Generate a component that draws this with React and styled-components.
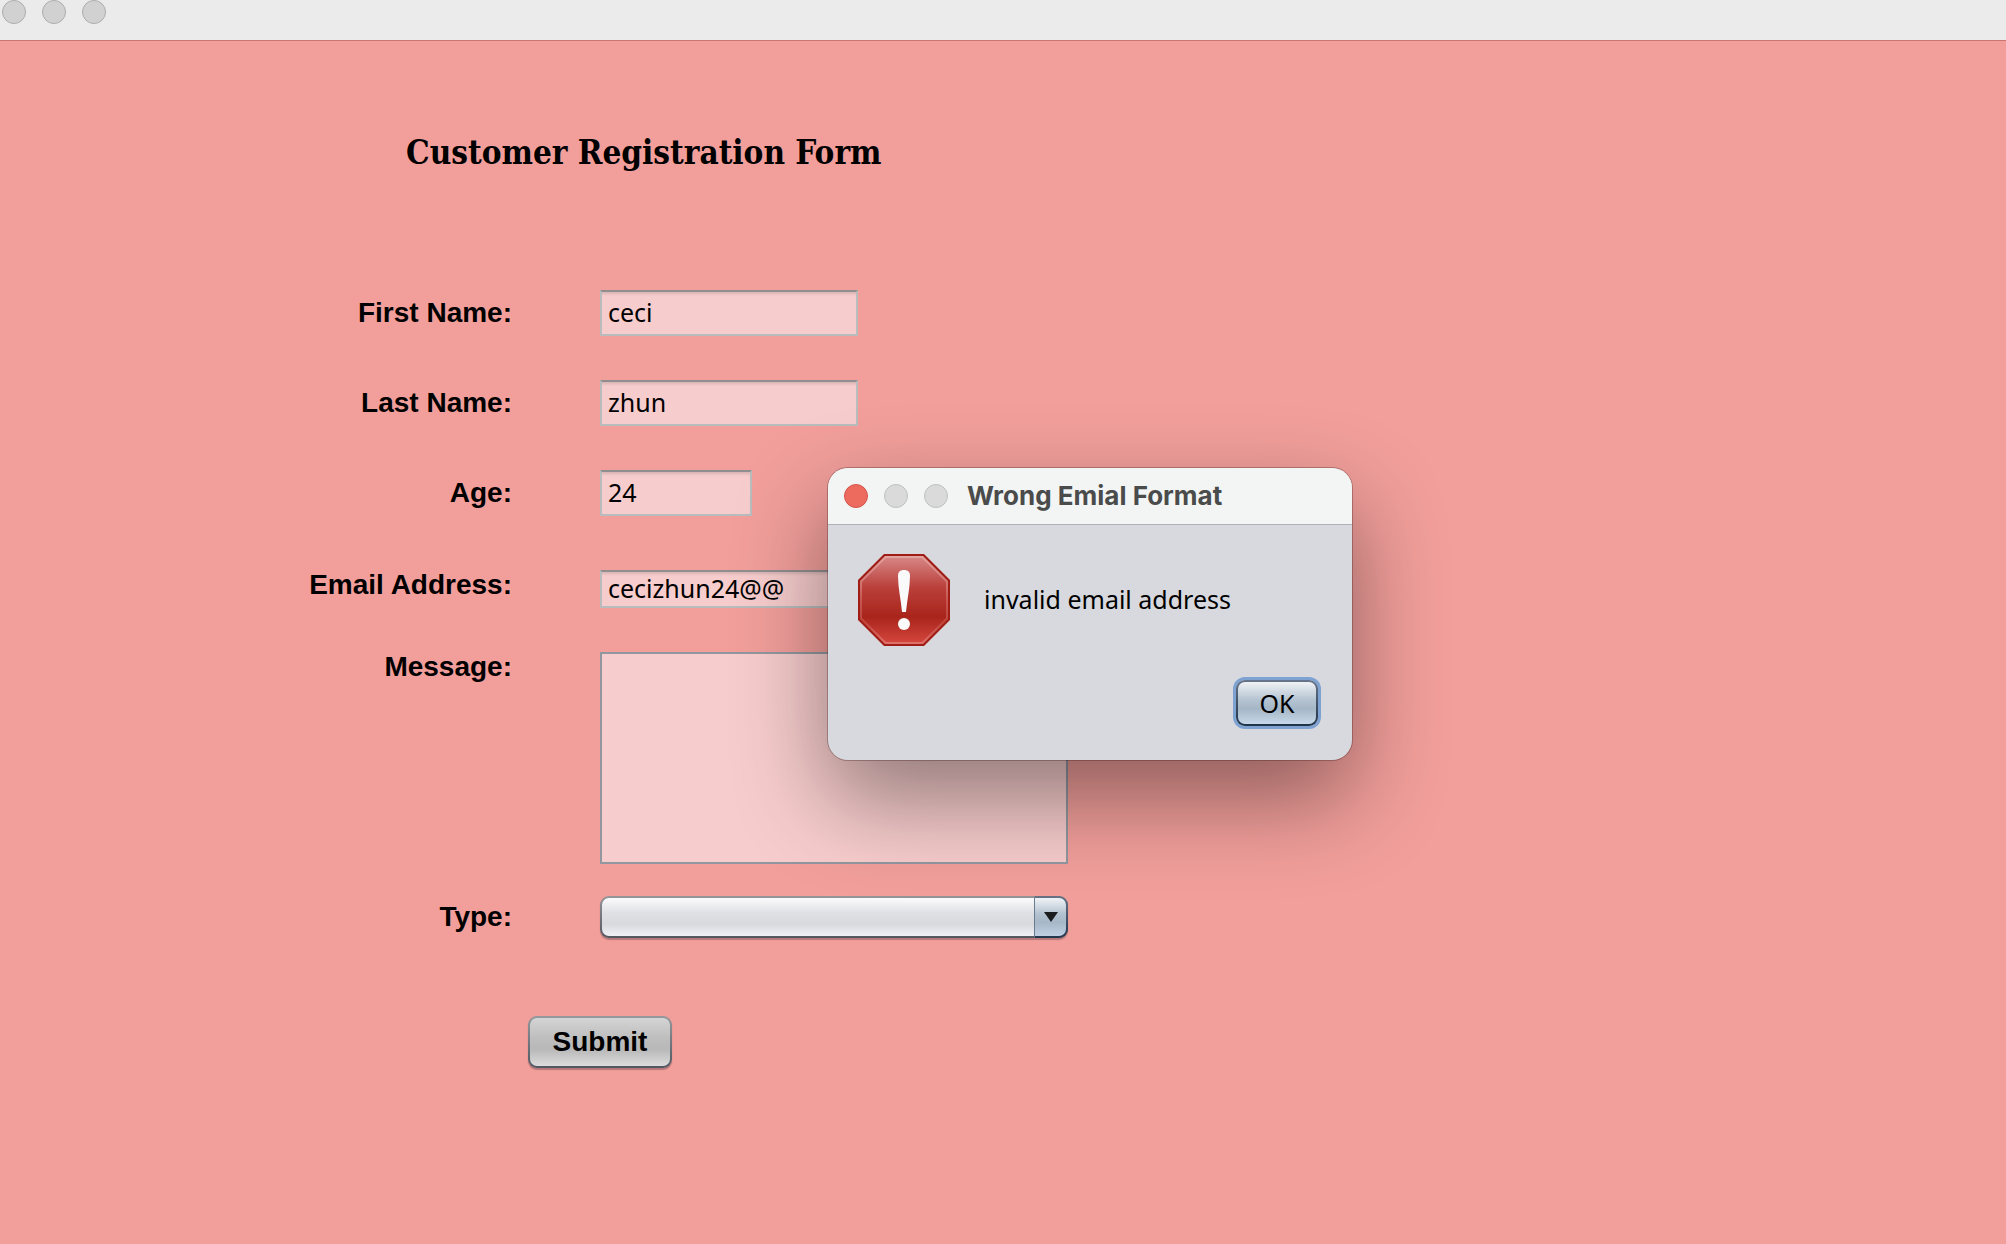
import React, { useState } from "react";
import styled, { createGlobalStyle } from "styled-components";

const GlobalStyle = createGlobalStyle`
  *, *::before, *::after { box-sizing: border-box; }
  body { margin: 0; background: #f29f9b; }
`;

const sans = `"Liberation Sans", Arial, sans-serif`;
const humanist = `"Noto Sans", "Open Sans", sans-serif`;

const Window = styled.div`
  position: relative;
  display: flex;
  flex-direction: column;
  min-height: 100vh;
  background: #f29f9b;
  color: #000;
  font-family: ${sans};
  overflow: hidden;
`;

const WindowBar = styled.header`
  display: flex;
  align-items: flex-start;
  gap: 16px;
  height: 41px;
  padding-left: 2px;
  background: #ebebeb;
  border-bottom: 1px solid #c87672;
`;

const Light = styled.button`
  width: 24px;
  height: 24px;
  padding: 0;
  border: 1px solid ${(p) => (p.$close ? "#d5554b" : p.$pale ? "#bfc0bf" : "#adadad")};
  border-radius: 50%;
  background: ${(p) => (p.$close ? "#ec6a5e" : p.$pale ? "#d9dad9" : "#d1d1d1")};
`;

const Content = styled.main`
  padding-top: 94px;
`;

const Heading = styled.h1`
  margin: 0;
  padding-left: 406px;
  font: bold 33px/36px "DejaVu Serif Condensed", "DejaVu Serif", serif;
`;

const Form = styled.form`
  display: flex;
  flex-direction: column;
  padding-top: 119px;
`;

const Row = styled.div`
  display: grid;
  grid-template-columns: 512px 1fr;
  column-gap: 88px;
  align-items: ${(p) => (p.$top ? "start" : "center")};
  margin-bottom: ${(p) => p.$after || 44}px;
`;

const Label = styled.label`
  font-size: 28px;
  line-height: 30px;
  font-weight: bold;
  text-align: right;
`;

const Input = styled.input`
  width: ${(p) => p.$width}px;
  height: ${(p) => p.$height || 46}px;
  padding: 0 6px 2px;
  border: 2px solid #b8bcbd;
  border-top-color: #918e90;
  border-radius: 0;
  outline: none;
  background: linear-gradient(#d9b4b4, #f7cccc 4px);
  color: #000;
  font: 25px ${humanist};
`;

const TextArea = styled.textarea`
  display: block;
  width: 468px;
  height: 212px;
  padding: 4px 6px;
  border: 2px solid #92979f;
  border-radius: 0;
  outline: none;
  resize: none;
  background: #f7cccc;
  font: 25px ${humanist};
`;

const SelectBox = styled.div`
  position: relative;
  width: 468px;
  height: 42px;
`;

const Select = styled.select`
  appearance: none;
  display: block;
  width: 100%;
  height: 100%;
  padding: 0 44px 0 8px;
  border: 2px solid transparent;
  border-radius: 9px;
  outline: none;
  background:
    linear-gradient(#fbfbfc, #dfe0e4 40%, #d8d9dc 68%, #f0f1f7) padding-box,
    linear-gradient(#95959a, #53565f) border-box;
  box-shadow: 0 2px 1px rgba(90, 60, 70, 0.4);
  font: 25px ${humanist};
`;

const SelectArrow = styled.span`
  position: absolute;
  top: 0;
  right: 0;
  display: flex;
  align-items: center;
  justify-content: center;
  width: 34px;
  height: 42px;
  border: 2px solid transparent;
  border-left: 1px solid #6b7c91;
  border-radius: 0 9px 9px 0;
  background:
    linear-gradient(#f0f3f7, #b3c2d0 42%, #a6b7c7 64%, #bfd0e4) padding-box,
    linear-gradient(#6a7386, #22364d) border-box;
  pointer-events: none;
`;

const Button = styled.button`
  height: ${(p) => (p.$primary ? 46 : 52)}px;
  width: ${(p) => (p.$primary ? 82 : 144)}px;
  padding: 0;
  border: 2px solid transparent;
  border-radius: 9px;
  outline: none;
  color: #000;
  font: ${(p) => (p.$primary ? `25px ${humanist}` : `bold 28px ${sans}`)};
  background: ${(p) =>
    p.$primary
      ? `linear-gradient(#f0f2f6, #b5c4d1 42%, #a5b6c6 64%, #c7d8ea) padding-box,
         linear-gradient(#67758a, #1f3348) border-box`
      : `linear-gradient(#d4d4d4, #bfbfbf 40%, #b8b8b8 65%, #dcdcdc) padding-box,
         linear-gradient(#95999c, #505761) border-box`};
  box-shadow: ${(p) => (p.$primary ? "0 0 0 3px #7ea2d1" : "0 2px 1px rgba(90, 60, 70, 0.4)")};
`;

const Actions = styled.div`
  padding-left: 528px;
`;

const Dialog = styled.section`
  position: absolute;
  top: 468px;
  left: 828px;
  width: 524px;
  height: 292px;
  border-radius: 20px;
  background: #d8d9de;
  box-shadow: 0 0 0 1px rgba(60, 20, 20, 0.3), 0 38px 92px rgba(0, 0, 0, 0.42);
  overflow: hidden;
`;

const DialogBar = styled.header`
  display: flex;
  align-items: center;
  gap: 16px;
  height: 57px;
  padding: 0 16px;
  background: #f3f5f4;
  border-bottom: 1px solid #adb0b7;
`;

const DialogTitle = styled.h2`
  margin: 0;
  padding-left: 3px;
  color: #4a4b4b;
  font: bold 26px/32px Inter, sans-serif;
  white-space: nowrap;
`;

const DialogBody = styled.div`
  display: flex;
  align-items: center;
  gap: 34px;
  padding: 29px 30px 0;
`;

const Message = styled.p`
  margin: 0;
  padding-bottom: 2px;
  font: 25px/32px ${humanist};
`;

const DialogActions = styled.footer`
  display: flex;
  justify-content: flex-end;
  padding: 34px 34px 0;
`;

const StopIcon = () => (
  <svg width="92" height="92" viewBox="0 0 92 92" aria-hidden="true">
    <defs>
      <linearGradient id="stopFill" x1="0" y1="0" x2="0" y2="1">
        <stop offset="0" stopColor="#d68482" />
        <stop offset="0.35" stopColor="#ba403b" />
        <stop offset="0.7" stopColor="#a9251b" />
        <stop offset="1" stopColor="#d2443c" />
      </linearGradient>
      <linearGradient id="stopEdge" x1="0" y1="0" x2="0" y2="1">
        <stop offset="0" stopColor="#e3a5a3" />
        <stop offset="0.5" stopColor="#c75752" />
        <stop offset="0.75" stopColor="#bf443c" />
        <stop offset="1" stopColor="#e2716b" />
      </linearGradient>
    </defs>
    <path d="M26 0H66L92 26V66L66 92H26L0 66V26Z" fill="#9f1d14" />
    <path d="M27 2H65L90 27V65L65 90H27L2 65V27Z" fill="url(#stopEdge)" />
    <path d="M28 4H64L88 28V64L64 88H28L4 64V28Z" fill="url(#stopFill)" />
    <path d="M40 22C40 18 42 16 46 16S52 18 52 22C52 34 49 46 48 58H44C43 46 40 34 40 22Z" fill="#fafafa" />
    <circle cx="46" cy="70" r="6" fill="#fafafa" />
  </svg>
);

function Field({ id, label, width, height, value, top, after }) {
  const [text, setText] = useState(value);
  return (
    <Row $top={top} $after={after}>
      <Label htmlFor={id}>{label}</Label>
      <Input
        id={id}
        $width={width}
        $height={height}
        value={text}
        spellCheck={false}
        onChange={(e) => setText(e.target.value)}
      />
    </Row>
  );
}

export default function App() {
  return (
    <>
      <GlobalStyle />
      <Window>
        <WindowBar>
          <Light type="button" aria-label="Close" />
          <Light type="button" aria-label="Minimize" />
          <Light type="button" aria-label="Zoom" />
        </WindowBar>
        <Content>
          <Heading>Customer Registration Form</Heading>
          <Form onSubmit={(e) => e.preventDefault()}>
            <Field id="first" label="First Name:" width={258} value="ceci" />
            <Field id="last" label="Last Name:" width={258} value="zhun" />
            <Field id="age" label="Age:" width={152} value="24" after={54} />
            <Field id="email" label="Email Address:" width={468} height={38} value="cecizhun24@@" top />
            <Row $top $after={32}>
              <Label htmlFor="message">Message:</Label>
              <TextArea id="message" />
            </Row>
            <Row $after={78}>
              <Label htmlFor="type">Type:</Label>
              <SelectBox>
                <Select id="type" />
                <SelectArrow>
                  <svg width="14" height="10" viewBox="0 0 14 10" aria-hidden="true">
                    <path d="M0 0H14L7 10Z" fill="#1b1c1e" />
                  </svg>
                </SelectArrow>
              </SelectBox>
            </Row>
            <Actions>
              <Button type="submit">Submit</Button>
            </Actions>
          </Form>
        </Content>
        <Dialog role="alertdialog" aria-labelledby="dialog-title" aria-describedby="dialog-text">
          <DialogBar>
            <Light type="button" $close aria-label="Close dialog" />
            <Light type="button" $pale aria-label="Minimize dialog" />
            <Light type="button" $pale aria-label="Zoom dialog" />
            <DialogTitle id="dialog-title">Wrong Emial Format</DialogTitle>
          </DialogBar>
          <DialogBody>
            <StopIcon />
            <Message id="dialog-text">invalid email address</Message>
          </DialogBody>
          <DialogActions>
            <Button type="button" $primary>OK</Button>
          </DialogActions>
        </Dialog>
      </Window>
    </>
  );
}
